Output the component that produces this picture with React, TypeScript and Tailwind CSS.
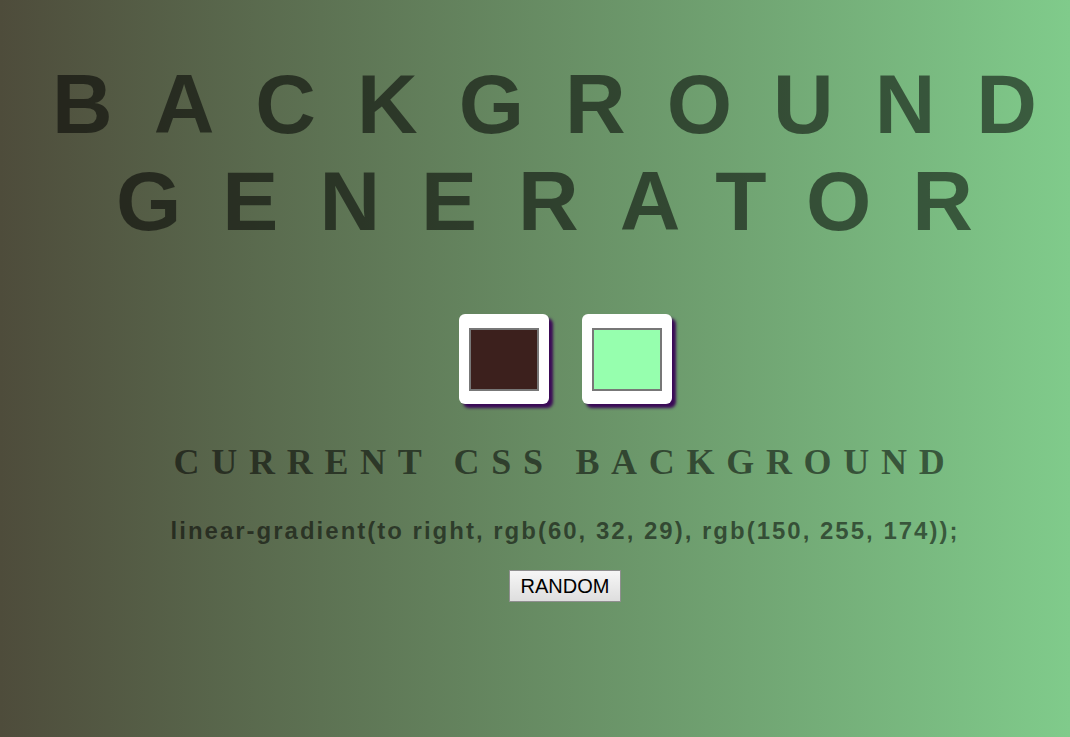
import React, { useState } from 'react';

const rgb = (c: number[]) => `rgb(${c[0]}, ${c[1]}, ${c[2]})`;

const Swatch: React.FC<{ color: string }> = ({ color }) => (
  <div className="flex h-[90px] w-[90px] items-center justify-center rounded-[6px] bg-white shadow-[4px_4px_3px_#3b0a57]">
    <div className="h-[63px] w-[70px] border-2 border-[#777777]" style={{ backgroundColor: color }} />
  </div>
);

export default function App() {
  const [colors, setColors] = useState<number[][]>([
    [60, 32, 29],
    [150, 255, 174],
  ]);

  const randomize = () => {
    const pick = () => [0, 0, 0].map(() => Math.floor(Math.random() * 256));
    setColors([pick(), pick()]);
  };

  const css = `linear-gradient(to right, ${rgb(colors[0])}, ${rgb(colors[1])});`;

  return (
    <div className="min-h-screen w-full overflow-hidden bg-[linear-gradient(to_right,#4e4c3b,#80cb8b)] pl-[60px] font-['Liberation_Sans',Arial,sans-serif] text-[rgba(0,0,0,0.54)]">
      <div className="flex flex-col items-center">
        {/* Title */}
        <h1 className="mt-[56px] flex flex-col items-center text-[84px] leading-[96.5px] font-bold tracking-[41px]">
          <span className="mr-[41px] whitespace-nowrap">
            BACKGROUN<span className="tracking-normal">D</span>
          </span>
          <span className="whitespace-nowrap">GENERATOR</span>
        </h1>

        {/* Color pickers */}
        <div className="mt-[65px] flex gap-[33px]">
          <Swatch color={rgb(colors[0])} />
          <Swatch color={rgb(colors[1])} />
        </div>

        <h3 className="mt-[38px] whitespace-nowrap font-['Liberation_Serif','Times_New_Roman',serif] text-[36px] leading-[41px] font-bold tracking-[11.7px]">
          CURRENT CSS BACKGROUND
        </h3>

        <p className="mt-[34px] whitespace-nowrap text-[24px] leading-[28px] font-bold tracking-[2px]">{css}</p>

        <button
          onClick={randomize}
          className="mt-[25px] h-[32px] w-[112px] border border-[#8f8f8f] bg-[linear-gradient(#f6f6f6,#dedede)] text-[20px] leading-none text-black"
        >
          RANDOM
        </button>
      </div>
    </div>
  );
}
